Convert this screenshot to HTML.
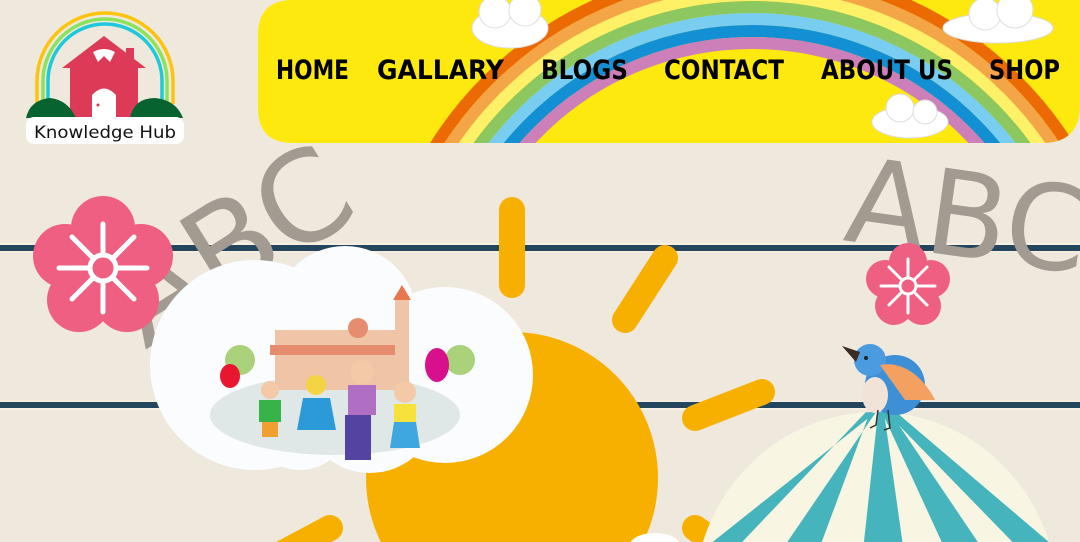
<!DOCTYPE html>
<html><head><meta charset="utf-8"><style>
html,body{margin:0;padding:0;width:1080px;height:542px;overflow:hidden;background:#efe8dc;}
svg{display:block}
</style></head><body>
<svg width="1080" height="542" viewBox="0 0 1080 542" xmlns="http://www.w3.org/2000/svg">
<rect width="1080" height="542" fill="#efe8dc"/>
<rect x="0" y="243" width="1080" height="9" fill="#f6efe2"/>
<rect x="0" y="245" width="1080" height="6" fill="#24455e"/>
<rect x="0" y="401" width="1080" height="9" fill="#f6efe2"/>
<rect x="0" y="402" width="1080" height="6" fill="#24455e"/>
<g font-family="DejaVu Sans, sans-serif" fill="#a39a92">
<text x="0" y="0" font-size="125" transform="translate(145,350) rotate(-32)">ABC</text>
<text x="0" y="0" font-size="118" transform="translate(842,240) rotate(8)">ABC</text>
</g>
<g transform="translate(103,268)">
<g fill="#ee5f82">
<circle cx="0" cy="-40" r="32"/><circle cx="38" cy="-12" r="32"/><circle cx="24" cy="32" r="32"/><circle cx="-24" cy="32" r="32"/><circle cx="-38" cy="-12" r="32"/><circle r="36"/>
</g>
<g stroke="#fff" stroke-width="5" stroke-linecap="round"><line x1="0" y1="-44" x2="0" y2="44"/><line x1="-44" y1="0" x2="44" y2="0"/><line x1="-31" y1="-31" x2="31" y2="31"/><line x1="-31" y1="31" x2="31" y2="-31"/></g>
<circle r="13" fill="#ee5f82" stroke="#fff" stroke-width="5"/>
</g>
<g transform="translate(908,286)">
<g fill="#ee5f82">
<circle cx="0" cy="-24" r="19"/><circle cx="23" cy="-7" r="19"/><circle cx="14" cy="20" r="19"/><circle cx="-14" cy="20" r="19"/><circle cx="-23" cy="-7" r="19"/><circle r="22"/>
</g>
<g stroke="#fff" stroke-width="3" stroke-linecap="round"><line x1="0" y1="-27" x2="0" y2="27"/><line x1="-27" y1="0" x2="27" y2="0"/><line x1="-19" y1="-19" x2="19" y2="19"/><line x1="-19" y1="19" x2="19" y2="-19"/></g>
<circle r="8" fill="#ee5f82" stroke="#fff" stroke-width="3"/>
</g>
<g stroke="#f7b000" stroke-width="26" stroke-linecap="round" fill="none">
<line x1="512" y1="210" x2="512" y2="285"/>
<line x1="665" y1="258" x2="625" y2="320"/>
<line x1="762" y1="392" x2="695" y2="418"/>
<line x1="695" y1="528" x2="740" y2="560"/>
<line x1="330" y1="528" x2="270" y2="560"/>
</g>
<circle cx="512" cy="478" r="146" fill="#f7b000"/>
<ellipse cx="655" cy="545" rx="25" ry="12" fill="#fff"/>
<defs><clipPath id="dome"><ellipse cx="876" cy="600" rx="182" ry="188"/></clipPath></defs>
<g clip-path="url(#dome)">
<rect x="680" y="400" width="400" height="150" fill="#f8f6e2"/>
<g fill="#45b4bd">
<path d="M876 412 L690 560 L725 560 L866 412Z"/>
<path d="M876 412 L775 560 L815 560 L870 412Z"/>
<path d="M878 412 L862 560 L905 560 L884 412Z"/>
<path d="M882 412 L950 560 L990 560 L890 412Z"/>
<path d="M886 412 L1030 560 L1070 560 L896 412Z"/>
</g>
</g>
<g>
<ellipse cx="895" cy="385" rx="30" ry="30" fill="#3d8fd6"/>
<circle cx="870" cy="360" r="16" fill="#4a9be0"/>
<path d="M842 346 L860 352 L856 362Z" fill="#3a2a22"/>
<path d="M880 365 C905 360 925 380 935 400 L905 400Z" fill="#f3a060"/>
<ellipse cx="875" cy="395" rx="13" ry="18" fill="#f1e3d8"/>
<circle cx="866" cy="358" r="2" fill="#222"/>
<path d="M878 410 L876 425 L870 428 M888 410 L890 428 L884 430" stroke="#333" stroke-width="1.5" fill="none"/>
</g>
<g fill="#fbfcfe">
<circle cx="255" cy="365" r="105"/>
<circle cx="345" cy="318" r="72"/>
<circle cx="445" cy="375" r="88"/>
<circle cx="370" cy="405" r="68"/>
<circle cx="300" cy="420" r="50"/>
</g>
<ellipse cx="335" cy="415" rx="125" ry="40" fill="#dfe8e6"/>
<rect x="275" y="330" width="120" height="60" fill="#f0c4a6"/>
<rect x="270" y="345" width="130" height="10" fill="#e58d6e"/>
<rect x="395" y="300" width="14" height="90" fill="#f0c4a6"/>
<path d="M393 300 L402 285 L411 300Z" fill="#e8774d"/>
<circle cx="358" cy="328" r="10" fill="#e58d6e"/>
<circle cx="240" cy="360" r="15" fill="#a9d27a"/><circle cx="460" cy="360" r="15" fill="#a9d27a"/>
<ellipse cx="230" cy="376" rx="10" ry="12" fill="#e8162e"/>
<ellipse cx="437" cy="365" rx="12" ry="17" fill="#d9108e"/>
<g><circle cx="270" cy="390" r="9" fill="#f3c9a7"/><rect x="259" y="400" width="22" height="22" fill="#37b34a"/><rect x="262" y="422" width="16" height="15" fill="#f0a030"/>
<circle cx="316" cy="385" r="10" fill="#f5d443"/><path d="M303 398 L330 398 L336 430 L297 430Z" fill="#2c9ad6"/>
<circle cx="362" cy="372" r="12" fill="#f3c9a7"/><rect x="348" y="385" width="28" height="30" fill="#b06fc2"/><rect x="345" y="415" width="26" height="45" fill="#5443a0"/>
<circle cx="405" cy="392" r="11" fill="#f3c9a7"/><rect x="394" y="404" width="22" height="18" fill="#f7e23b"/><path d="M394 422 L416 422 L420 448 L390 448Z" fill="#3fa7e0"/></g>
<defs><clipPath id="ban"><path d="M293 0 H1080 V105 Q1080 143 1042 143 H293 Q258 143 258 108 V35 Q258 0 293 0Z"/></clipPath></defs>
<g clip-path="url(#ban)">
<rect x="258" y="0" width="822" height="143" fill="#fde90d"/>
<g fill="none" stroke-width="12">
<circle cx="752" cy="345" r="374" stroke="#ec6a04"/>
<circle cx="752" cy="345" r="362" stroke="#f4a548"/>
<circle cx="752" cy="345" r="350" stroke="#fef067"/>
<circle cx="752" cy="345" r="338" stroke="#8cc760"/>
<circle cx="752" cy="345" r="326" stroke="#78cdf1"/>
<circle cx="752" cy="345" r="314" stroke="#1390d4"/>
<circle cx="752" cy="345" r="302" stroke="#cc7fb9"/>
</g>
<g fill="#fff" stroke="#ddd" stroke-width="1">
<ellipse cx="510" cy="28" rx="38" ry="20"/><circle cx="495" cy="12" r="16"/><circle cx="525" cy="10" r="16"/>
<ellipse cx="998" cy="28" rx="55" ry="15"/><circle cx="985" cy="14" r="16"/><circle cx="1015" cy="10" r="18"/>
<ellipse cx="910" cy="122" rx="38" ry="16"/><circle cx="900" cy="108" r="14"/><circle cx="925" cy="112" r="12"/>
</g>
</g>
<g font-family="DejaVu Sans, Liberation Sans, sans-serif" font-size="27" font-weight="bold" fill="#000">
<text x="276" y="79" textLength="73" lengthAdjust="spacingAndGlyphs">HOME</text>
<text x="377" y="79" textLength="127" lengthAdjust="spacingAndGlyphs">GALLARY</text>
<text x="541" y="79" textLength="87" lengthAdjust="spacingAndGlyphs">BLOGS</text>
<text x="664" y="79" textLength="120" lengthAdjust="spacingAndGlyphs">CONTACT</text>
<text x="821" y="79" textLength="132" lengthAdjust="spacingAndGlyphs">ABOUT US</text>
<text x="989" y="79" textLength="71" lengthAdjust="spacingAndGlyphs">SHOP</text>
</g>
<g fill="none" stroke-width="3.5">
<path d="M37 104 V81 A68 68 0 0 1 173 81 V104" stroke="#fcc40e"/>
<path d="M43 104 V81 A62 62 0 0 1 167 81 V104" stroke="#8ae35a"/>
<path d="M48 104 V81 A57 57 0 0 1 162 81 V104" stroke="#1ec9dc"/>
</g>
<rect x="126" y="48" width="8" height="20" fill="#dc3a57"/>
<path d="M104 36 L146 68 L138 68 L138 118 L70 118 L70 68 L62 68Z" fill="#dc3a57"/>
<path d="M93 52 Q104 46 115 52 L110 62 L104 56 L98 62Z" fill="#fff"/>
<path d="M92 118 V95 Q104 82 116 95 V118Z" fill="#fff"/>
<circle cx="98" cy="105" r="1.5" fill="#dc3a57"/>
<path d="M26 118 Q30 100 50 98 Q68 100 76 118Z" fill="#07632f"/>
<path d="M130 118 Q134 98 155 98 Q176 100 183 118Z" fill="#07632f"/>
<rect x="26" y="117" width="158" height="27" rx="8" fill="#fff"/>
<text x="105" y="138" text-anchor="middle" font-family="DejaVu Sans, Liberation Sans, sans-serif" font-size="17" fill="#111" textLength="142" lengthAdjust="spacingAndGlyphs">Knowledge Hub</text>
</svg>
</body></html>
